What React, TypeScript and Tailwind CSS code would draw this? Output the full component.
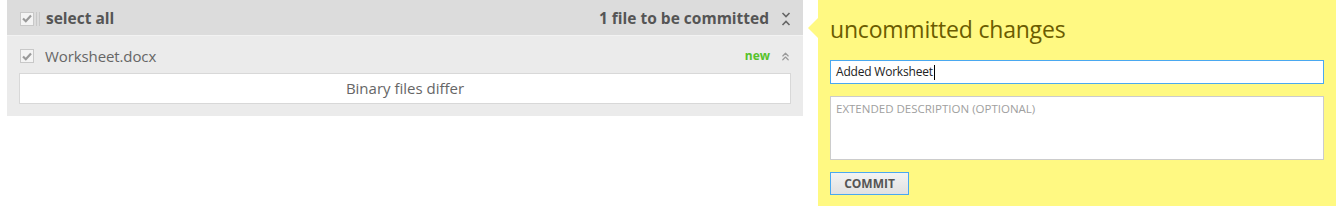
import { ChevronsUp } from 'lucide-react'

function CheckBox({ partial }: { partial?: boolean }) {
  return (
    <div className="flex items-center gap-[2px]">
      <div className="w-[14px] h-[14px] bg-[#f4f4f4] border border-[#c8c8c8] flex items-center justify-center">
        <svg width="10" height="9" viewBox="0 0 10 9">
          <path d="M1 4.5 L3.8 7.2 L9 1.5" stroke="#9a9a9a" strokeWidth="2.2" fill="none" />
        </svg>
      </div>
      {partial && (
        <div className="flex gap-[2px] h-[14px]">
          <div className="w-[1px] bg-[#c8c8c8]" />
          <div className="w-[1px] bg-[#c8c8c8]" />
        </div>
      )}
    </div>
  )
}

function CollapseIcon() {
  return (
    <svg width="10" height="16" viewBox="0 0 10 16">
      <path d="M1.5 2 L5 5.5 L8.5 2" stroke="#666" strokeWidth="1.6" fill="none" />
      <path d="M1.5 14 L5 10.5 L8.5 14" stroke="#666" strokeWidth="1.6" fill="none" />
    </svg>
  )
}

export default function App() {
  return (
    <div className="w-[1336px] h-[206px] bg-white flex font-['Open_Sans',sans-serif]">
      <div className="w-[796px] ml-[7px] self-start">
        {/* header */}
        <div className="h-[36px] bg-[#dcdcdc] flex items-center pl-[13px] pr-[12px] pt-[2px] border-b border-[#f2f2f2]">
          <CheckBox partial />
          <span className="ml-[6px] text-[15.5px] font-bold text-[#555]">select all</span>
          <span className="ml-auto text-[15.5px] font-bold text-[#555]">1 file to be committed</span>
          <span className="ml-[12px] flex items-center">
            <CollapseIcon />
          </span>
        </div>
        {/* file */}
        <div className="bg-[#ebebeb] pl-[12px] pr-[12px] pt-[3px] pb-[12px]">
          <div className="h-[34px] flex items-center pl-[1px]">
            <CheckBox />
            <span className="ml-[11px] text-[15px] text-[#666] tracking-[-0.1px]">Worksheet.docx</span>
            <span className="ml-auto text-[12px] font-bold text-[#55c22a]">new</span>
            <ChevronsUp size={13} strokeWidth={2.2} className="ml-[9px] mr-[-1px] text-[#999]" />
          </div>
          <div className="h-[31px] bg-white border border-[#d8d8d8] flex items-center justify-center text-[15px] text-[#666]">
            Binary files differ
          </div>
        </div>
      </div>

      <div className="ml-[15px] flex-1 relative bg-[#fff982] pl-[12px] pr-[12px]">
        <div className="absolute left-[-10px] top-[18px] w-0 h-0 border-y-[10px] border-y-transparent border-r-[10px] border-r-[#fff982]" />
        <div className="pt-[13px] text-[23px] leading-[32px] text-[#6b5c00] tracking-[-0.2px]">uncommitted changes</div>
        <div className="mt-[15px] h-[24px] bg-white border border-[#4aa8f0] flex items-center pl-[5px] text-[12px] text-[#222] tracking-[-0.2px]">
          Added Worksheet<span className="w-[1px] h-[15px] bg-black ml-[1px]" />
        </div>
        <div className="mt-[12px] h-[64px] bg-white border border-[#cccccc] pl-[5px] pt-[3px] text-[11.5px] text-[#a0a0a0] uppercase">
          Extended description (optional)
        </div>
        <button className="mt-[12px] w-[79px] h-[23px] bg-gradient-to-b from-[#f3f3f3] to-[#e1e1e1] border border-[#4aa8f0] text-[12px] font-bold text-[#555] flex items-center justify-center">
          COMMIT
        </button>
      </div>
    </div>
  )
}
